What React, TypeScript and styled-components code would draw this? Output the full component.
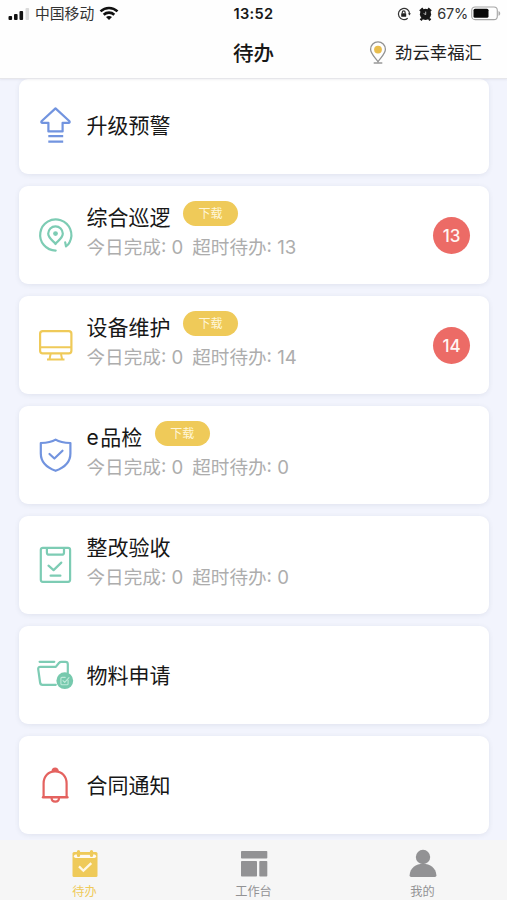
import React from "react";
import styled, { createGlobalStyle } from "styled-components";

const GlobalStyle = createGlobalStyle`
  * { box-sizing: border-box; }
  body { margin: 0; background: #f2f4fe; }
`;

const blue = "#7294df";
const green = "#7dccb4";
const gold = "#efca59";
const red = "#e4625f";
const gray = "#929294";

const Screen = styled.main`
  width: 507px;
  height: 900px;
  display: flex;
  flex-direction: column;
  overflow: hidden;
  background: #f2f4fd;
  color: #171717;
  font-family: Inter, "Noto Sans CJK SC", sans-serif;
`;

const Header = styled.header`
  flex: none;
  height: 79px;
  background: #fefefe;
  border-bottom: 1px solid #e6e6ea;
  box-shadow: 0 1px 2px rgba(60, 60, 80, 0.07);
  z-index: 1;
`;

const StatusBar = styled.div`
  height: 27px;
  padding: 0 6px 0 8px;
  display: grid;
  grid-template-columns: 1fr auto 1fr;
  align-items: center;
`;

const Carrier = styled.div`
  display: flex;
  align-items: center;
  font-size: 14.8px;
  line-height: 20px;
  color: #333;
  gap: 5px;
`;

const Clock = styled.time`
  font-size: 14.6px;
  font-weight: 600;
  letter-spacing: 0.35px;
  line-height: 20px;
  margin-left: -2px;
`;

const Indicators = styled.div`
  display: flex;
  justify-content: flex-end;
  align-items: center;
  font-size: 14.5px;
  line-height: 20px;
  color: #333;
`;

const Percent = styled.span`
  margin: 0 3px 0 5px;
  letter-spacing: -0.2px;
`;

const TitleBar = styled.div`
  height: 51px;
  padding: 1px 25px 0;
  display: grid;
  grid-template-columns: 1fr auto 1fr;
  align-items: center;
`;

const PageTitle = styled.h1`
  grid-column: 2;
  margin: 0;
  padding-top: 1px;
  font-size: 20.6px;
  font-weight: 500;
  line-height: 28px;
`;

const Place = styled.div`
  display: flex;
  justify-content: flex-end;
  align-items: center;
  gap: 8px;
  font-size: 17.4px;
  line-height: 24px;
  color: #222;
`;

const List = styled.section`
  flex: 1;
  min-height: 0;
  padding: 0 18px 0 19px;
  display: flex;
  flex-direction: column;
  gap: 12px;
`;

const Card = styled.article`
  flex: none;
  height: 98px;
  padding: 0 19px 0 16px;
  display: flex;
  align-items: center;
  border-radius: 9px;
  background: #fff;
  box-shadow: 0 1px 5px rgba(70, 75, 110, 0.1);

  &:first-child {
    height: 95px;
    padding-bottom: 3px;
  }
`;

const IconBox = styled.div`
  width: 40px;
  height: 40px;
  margin-right: 11.5px;
  flex: none;
  svg { display: block; }
`;

const Body = styled.div<{ $detailed: boolean }>`
  flex: 1;
  height: ${(p) => (p.$detailed ? "66px" : "auto")};
  padding-top: ${(p) => (p.$detailed ? "0" : "2px")};
`;

const TitleLine = styled.div`
  height: 30px;
  display: flex;
  align-items: flex-start;
`;

const CardTitle = styled.h2`
  margin: 0;
  font-size: 21px;
  font-weight: 400;
  line-height: 32px;
  white-space: nowrap;
`;

const LatinPrefix = styled.span`
  margin-right: 1.5px;
`;

const Download = styled.button`
  width: 55px;
  height: 25px;
  margin: -1px 0 0 12.5px;
  padding: 0;
  border: 0;
  border-radius: 12.5px;
  background: ${gold};
  color: #fff6d8;
  font: 12px/24px Inter, "Noto Sans CJK SC", sans-serif;
`;

const Stats = styled.div`
  display: flex;
  gap: 9px;
  font-size: 18.6px;
  line-height: 30px;
  color: #adadad;
  white-space: pre;
`;

const Count = styled.span`
  width: 37px;
  height: 37px;
  padding-top: 1px;
  border-radius: 50%;
  display: grid;
  place-items: center;
  background: #ec6b66;
  color: #fff5f2;
  font-size: 17px;
  font-weight: 500;
`;

const TabBar = styled.nav`
  flex: none;
  height: 60px;
  display: grid;
  grid-template-columns: repeat(3, 1fr);
  background: #f6f6f6;
  z-index: 1;
`;

const Tab = styled.a<{ $active?: boolean }>`
  display: flex;
  flex-direction: column;
  align-items: center;
  padding-top: 9px;
  gap: 5px;
  color: ${(p) => (p.$active ? gold : gray)};
  font-size: 12.2px;
  line-height: 18px;
`;

function Signal() {
  return (
    <svg width="22" height="14" viewBox="0 0 22 14">
      <rect x="0.5" y="9" width="3.6" height="4" rx="1" fill="#111" />
      <rect x="6" y="7" width="3.6" height="6" rx="1" fill="#111" />
      <rect x="11.5" y="4" width="3.6" height="9" rx="1" fill="#111" />
      <rect x="17.5" y="1" width="3.6" height="12" rx="1" fill="#dadada" />
    </svg>
  );
}

function Wifi() {
  return (
    <svg width="20" height="15" viewBox="0 0 20 15" fill="none" stroke="#111" strokeWidth="2.6">
      <path d="M1.5 5.4C6.3.8 13.7.8 18.5 5.4" />
      <path d="M4.7 8.7c3-2.8 7.6-2.8 10.6 0" />
      <path d="m7 11 3 3 3-3c-1.8-1.5-4.2-1.5-6 0Z" fill="#111" stroke="none" />
    </svg>
  );
}

function RotationLock() {
  return (
    <svg width="14" height="14" viewBox="0 0 14 14" fill="none" stroke="#333" strokeWidth="1.2">
      <path d="M10.7 11.2A5.6 5.6 0 1 1 12.6 7" />
      <path d="m10.9 6.4 1.7 2 1.2-2.1Z" fill="#333" stroke="none" />
      <rect x="4.2" y="6.2" width="5" height="3.6" rx=".5" fill="#222" stroke="none" />
      <path d="M5.3 6.5V5.2a1.4 1.4 0 0 1 2.8 0v1.3" />
    </svg>
  );
}

function Alarm() {
  return (
    <svg width="13" height="14" viewBox="0 0 13 14">
      <circle cx="6.5" cy="7.3" r="5.6" fill="#171717" />
      <path d="m1 4.2 3.1-2.7M12 4.2 8.9 1.5M3 11.5l-1.3 1.7M10 11.5l1.3 1.7" stroke="#171717" strokeWidth="2.4" />
      <path d="M6.7 4.6v3L4.6 6.5" fill="none" stroke="#ddd" strokeWidth=".8" />
    </svg>
  );
}

function Battery() {
  return (
    <svg width="30" height="15" viewBox="0 0 30 15">
      <rect x=".7" y="1" width="25.6" height="12.6" rx="3.4" fill="none" stroke="#a5a5a5" strokeWidth="1.1" />
      <rect x="2.5" y="2.8" width="15" height="9" rx="1.5" fill="#080808" />
      <path d="M27.5 5c2.3.8 2.3 4 0 4.8Z" fill="#aaa" />
    </svg>
  );
}

function LocationPin() {
  return (
    <svg width="18" height="24" viewBox="0 0 18 24" fill="none">
      <path d="M9 20.8C7.2 17.4 1.6 13.2 1.6 8.3a7.4 7.4 0 0 1 14.8 0c0 4.9-5.6 9.1-7.4 12.5Z" stroke="#929292" strokeWidth="1.3" />
      <circle cx="9" cy="8.6" r="3.9" fill="#e8bd4d" />
      <path d="M4.7 22h8.6" stroke="#888" strokeWidth="1.3" />
    </svg>
  );
}

type IconName = "upgrade" | "patrol" | "monitor" | "shield" | "clipboard" | "folder" | "bell";

function CardIcon({ name }: { name: IconName }) {
  const common = { width: 40, height: 40, viewBox: "0 0 40 40", fill: "none", strokeWidth: 2.2 } as const;
  switch (name) {
    case "upgrade":
      return (
        <svg {...common} stroke={blue} strokeLinejoin="round">
          <path d="M20.5 3.4 6.5 16.2q-.7 1.5 1 1.6h5.9v8.6h14.2v-8.6h5.9q1.7-.1 1-1.6Z" />
          <path d="M13.3 31.2h14.9M13.3 36.6h14.9" strokeWidth="2.3" />
        </svg>
      );
    case "patrol":
      return (
        <svg {...common} stroke={green} strokeLinecap="round" strokeLinejoin="round">
          <path d="M20.7 35.6A15.6 15.6 0 1 1 34.6 27.2Q33.4 29.8 31 31.4l-.8-4" />
          <path d="M20.5 29c-1.2-2.6-7.3-5.2-7.3-10.4a7.3 7.3 0 0 1 14.6 0c0 5.2-6.1 7.8-7.3 10.4Z" />
          <circle cx="20.5" cy="18.6" r="2.4" fill={green} stroke="none" />
        </svg>
      );
    case "monitor":
      return (
        <svg {...common} stroke={gold}>
          <rect x="5.1" y="6.2" width="31.3" height="22.2" rx="2.6" />
          <path d="M5 22.2h31.5M15.6 29l-1 4.8M26 29l1 4.8M12 34.4h17.5" strokeWidth="2" />
        </svg>
      );
    case "shield":
      return (
        <svg {...common} stroke={blue} strokeLinejoin="round" strokeLinecap="round">
          <path d="M20.6 4.6c4.1 2.5 9.1 3.2 14.8 3.4v10.5c0 8.4-6.2 14.2-14.8 17.3C12 32.700 5.800 26.900 5.800 18.500V8c5.700-.2 10.700-.9 14.800-3.400Z" />
          <path d="m14.5 19 4.900 4.500 8.100-7.800" />
        </svg>
      );
    case "clipboard":
      return (
        <svg {...common} stroke={green} strokeLinecap="round" strokeLinejoin="round">
          <rect x="5.8" y="2.8" width="29.3" height="34" rx="2" />
          <path d="M11.9 3v4.400c0 1.600.7 2.300 2.300 2.300h12.500c1.600 0 2.300-.7 2.300-2.300V3M13.500 20.700l5.100 4.400 7.700-7.500M15.600 30.700h9.800" />
        </svg>
      );
    case "folder":
      return (
        <svg {...common} stroke={green} strokeLinecap="round" strokeLinejoin="round">
          <path d="M4.600 6.800h14.700M20.800 29.800H7.500c-1.500 0-2.200-.7-2.400-2.300L3.200 14.200c-.2-1.600.5-2.300 2.100-2.300h15.500l3.300-4.100q.7-1 2.200-1h4.200c1.500 0 2.300.8 2.300 2.300v8.500" />
          <circle cx="29.800" cy="25.700" r="8.400" fill="#76c9ad" stroke="none" />
          <path d="M33.100 25.200v3.500c0 .7-.4 1.100-1.100 1.100h-5c-.7 0-1.100-.4-1.100-1.100v-5.200c0-.7.4-1.100 1.100-1.100h3.200M28 25.700l1.700 1.600 4.300-4.600" stroke="#bfe9d9" strokeWidth="1.100" />
        </svg>
      );
    case "bell":
      return (
        <svg {...common} stroke={red} strokeLinejoin="round">
          <path d="M8.600 31.600V18.400c0-7 4.700-12 11.500-12s11.500 5 11.500 12v13.200" />
          <path d="M8 32.200h24.400" strokeWidth="2.400" strokeLinecap="round" />
          <path d="M16.600 33c0 4.800 7.400 4.800 7.400 0" />
          <path d="M17.700 6a2.500 2.500 0 0 1 5 0Z" fill={red} />
        </svg>
      );
  }
}

function TodoIcon() {
  return (
    <svg width="28" height="29" viewBox="0 0 28 29" fill="none">
      <rect x="1.500" y="3" width="25" height="25" rx="1.500" fill={gold} />
      <path d="M4.700 7.300H23.300" stroke="#fffaf0" strokeWidth="3.600" strokeLinecap="round" />
      <path d="M7.300 4.700h13.400" stroke={gold} strokeWidth="2" />
      <path d="M7.500 2.500v4M20.500 2.500v4" stroke={gold} strokeWidth="3.200" strokeLinecap="round" />
      <path d="m8 17.400 4.400 4.300 7.900-7.500" stroke="#fff8e5" strokeWidth="2.300" />
    </svg>
  );
}

function WorkbenchIcon() {
  return (
    <svg width="28" height="29" viewBox="0 0 28 29" fill={gray}>
      <rect x="1" y="2" width="26.300" height="7.600" rx=".8" />
      <rect x="1" y="12" width="16" height="15.500" rx=".8" />
      <rect x="19.300" y="12" width="8" height="15.500" rx=".8" />
    </svg>
  );
}

function PersonIcon() {
  return (
    <svg width="28" height="29" viewBox="0 0 28 29" fill={gray}>
      <circle cx="14" cy="8" r="7.200" />
      <path d="M.6 26.200C1.200 19 6.700 14.800 14 14.800s12.800 4.200 13.400 11.400q.1 1.600-1.500 1.800H2.100Q.5 27.800.6 26.200Z" />
    </svg>
  );
}

interface Entry {
  icon: IconName;
  prefix?: string;
  title: string;
  overdue?: number;
  download?: boolean;
}

const entries: Entry[] = [
  { icon: "upgrade", title: "升级预警" },
  { icon: "patrol", title: "综合巡逻", overdue: 13, download: true },
  { icon: "monitor", title: "设备维护", overdue: 14, download: true },
  { icon: "shield", prefix: "e", title: "品检", overdue: 0, download: true },
  { icon: "clipboard", title: "整改验收", overdue: 0 },
  { icon: "folder", title: "物料申请" },
  { icon: "bell", title: "合同通知" },
];

function EntryCard({ entry }: { entry: Entry }) {
  const detailed = entry.overdue !== undefined;
  const title = (
    <CardTitle>
      {entry.prefix && <LatinPrefix>{entry.prefix}</LatinPrefix>}
      {entry.title}
    </CardTitle>
  );
  return (
    <Card>
      <IconBox><CardIcon name={entry.icon} /></IconBox>
      <Body $detailed={detailed}>
        {detailed ? (
          <>
            <TitleLine>
              {title}
              {entry.download && <Download>下载</Download>}
            </TitleLine>
            <Stats>
              <span>今日完成: 0</span>
              <span>超时待办: {entry.overdue}</span>
            </Stats>
          </>
        ) : (
          title
        )}
      </Body>
      {!!entry.overdue && <Count>{entry.overdue}</Count>}
    </Card>
  );
}

export default function App() {
  return (
    <>
      <GlobalStyle />
      <Screen>
        <Header>
          <StatusBar>
            <Carrier><Signal />中国移动<Wifi /></Carrier>
            <Clock>13:52</Clock>
            <Indicators>
              <RotationLock />&nbsp;&nbsp;<Alarm /><Percent>67%</Percent><Battery />
            </Indicators>
          </StatusBar>
          <TitleBar>
            <PageTitle>待办</PageTitle>
            <Place><LocationPin />劲云幸福汇</Place>
          </TitleBar>
        </Header>
        <List>
          {entries.map((entry) => <EntryCard key={entry.title} entry={entry} />)}
        </List>
        <TabBar>
          <Tab $active><TodoIcon />待办</Tab>
          <Tab><WorkbenchIcon />工作台</Tab>
          <Tab><PersonIcon />我的</Tab>
        </TabBar>
      </Screen>
    </>
  );
}
